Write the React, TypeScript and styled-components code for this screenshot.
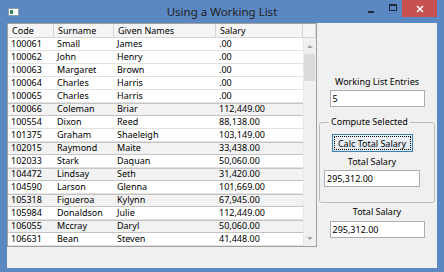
import styled, { createGlobalStyle } from 'styled-components';

const GlobalStyle = createGlobalStyle`
  html, body {
    margin: 0;
    padding: 0;
  }
  body {
    width: 444px;
    height: 272px;
    overflow: hidden;
    font-family: "Noto Sans", "Open Sans", sans-serif;
    color: #000;
  }
`;

interface Employee {
  code: string;
  surname: string;
  given: string;
  salary: string;
  selected?: boolean;
}

const employees: Employee[] = [
  { code: '100061', surname: 'Small', given: 'James', salary: '.00' },
  { code: '100062', surname: 'John', given: 'Henry', salary: '.00' },
  { code: '100063', surname: 'Margaret', given: 'Brown', salary: '.00' },
  { code: '100064', surname: 'Charles', given: 'Harris', salary: '.00' },
  { code: '100065', surname: 'Charles', given: 'Harris', salary: '.00' },
  { code: '100066', surname: 'Coleman', given: 'Briar', salary: '112,449.00', selected: true },
  { code: '100554', surname: 'Dixon', given: 'Reed', salary: '88,138.00' },
  { code: '101375', surname: 'Graham', given: 'Shaeleigh', salary: '103,149.00' },
  { code: '102015', surname: 'Raymond', given: 'Maite', salary: '33,438.00', selected: true },
  { code: '102033', surname: 'Stark', given: 'Daquan', salary: '50,060.00' },
  { code: '104472', surname: 'Lindsay', given: 'Seth', salary: '31,420.00', selected: true },
  { code: '104590', surname: 'Larson', given: 'Glenna', salary: '101,669.00' },
  { code: '105318', surname: 'Figueroa', given: 'Kylynn', salary: '67,945.00', selected: true },
  { code: '105984', surname: 'Donaldson', given: 'Julie', salary: '112,449.00' },
  { code: '106055', surname: 'Mccray', given: 'Daryl', salary: '50,060.00', selected: true },
  { code: '106631', surname: 'Bean', given: 'Steven', salary: '41,448.00' },
];

const COLUMNS = '46px 60px 102px 87px';

const Window = styled.div`
  width: 444px;
  height: 272px;
  box-sizing: border-box;
  padding: 0 7px 4px 7px;
  background: #5b87c2;
  display: flex;
  flex-direction: column;
`;

const TitleBar = styled.div`
  height: 23px;
  flex-shrink: 0;
  display: grid;
  grid-template-columns: 1fr auto 1fr;
  align-items: start;
`;

const AppIcon = styled.svg`
  margin: 8px 0 0 1px;
`;

const Title = styled.div`
  font-size: 11.5px;
  line-height: 14px;
  padding-top: 5px;
  color: #222;
  white-space: nowrap;
`;

const Controls = styled.div`
  display: flex;
  justify-content: flex-end;
  align-items: flex-start;
`;

const CtrlButton = styled.div<{ $w: number; $close?: boolean }>`
  width: ${(p) => p.$w}px;
  height: 17px;
  display: flex;
  align-items: center;
  justify-content: center;
  background: ${(p) => (p.$close ? '#c75050' : 'transparent')};
`;

const MinGlyph = styled.div`
  width: 6px;
  height: 2px;
  margin-top: 6px;
  background: #1c2a3c;
`;

const MaxGlyph = styled.div`
  width: 6px;
  height: 4px;
  margin-top: -2px;
  border: 1px solid #1c2a3c;
  border-top-width: 2px;
`;

const Client = styled.div`
  flex: 1;
  background: #f0f0f0;
  display: flex;
  align-items: flex-start;
`;

const GridBox = styled.div`
  width: 310px;
  box-sizing: border-box;
  border: 1px solid #a0a0a0;
  background: #fff;
  display: flex;
  flex-direction: column;
  font-size: 9px;
`;

const HeaderRow = styled.div`
  display: grid;
  grid-template-columns: ${COLUMNS} 13px;
  height: 14px;
  background: #f5f5f5;
  border-bottom: 1px solid #d5d5d5;
  box-sizing: border-box;
`;

const HeaderCell = styled.div`
  padding: 1px 0 0 4px;
  line-height: 12px;
  border-right: 1px solid #d5d5d5;
  white-space: nowrap;
  overflow: hidden;
`;

const Body = styled.div`
  display: flex;
`;

const Rows = styled.div`
  width: 295px;
`;

const Row = styled.div<{ $selected?: boolean }>`
  display: grid;
  grid-template-columns: ${COLUMNS};
  height: 13px;
  box-sizing: border-box;
  line-height: 12px;
  background: ${(p) => (p.$selected ? '#f2f2f2' : '#fff')};
  border-bottom: 1px solid ${(p) => (p.$selected ? '#c4c4c4' : '#e2e2e2')};
  box-shadow: ${(p) => (p.$selected ? 'inset 0 1px 0 #c4c4c4' : 'none')};
`;

const Cell = styled.div`
  padding-left: 3px;
  white-space: nowrap;
  overflow: hidden;
`;

const ScrollBar = styled.div`
  width: 13px;
  background: #f0f0f0;
  display: flex;
  flex-direction: column;
  border-left: 1px solid #e8e8e8;
  box-sizing: border-box;
`;

const ArrowButton = styled.div`
  height: 16px;
  display: flex;
  align-items: center;
  justify-content: center;
`;

const Arrow = styled.div<{ $down?: boolean }>`
  width: 0;
  height: 0;
  border-left: 3px solid transparent;
  border-right: 3px solid transparent;
  ${(p) => (p.$down ? 'border-top: 3px solid #a6a6a6;' : 'border-bottom: 3px solid #a6a6a6;')}
`;

const Thumb = styled.div`
  height: 27px;
  margin: 0 1px 0 0;
  background: #dcdcdc;
`;

const Track = styled.div`
  flex: 1;
`;

const Side = styled.div`
  flex: 1;
  display: flex;
  flex-direction: column;
  align-items: center;
  font-size: 9px;
`;

const Label = styled.div<{ $top: number }>`
  margin-top: ${(p) => p.$top}px;
  line-height: 12px;
  white-space: nowrap;
`;

const TextBox = styled.div<{ $top: number; $w: number }>`
  margin-top: ${(p) => p.$top}px;
  width: ${(p) => p.$w}px;
  height: 17px;
  box-sizing: border-box;
  border: 1px solid #abadb3;
  background: #fff;
  padding-left: 2px;
  line-height: 15px;
`;

const Group = styled.fieldset`
  margin: 9px 0 0 0;
  width: 116px;
  box-sizing: border-box;
  border: 1px solid #bcbcbc;
  border-radius: 3px;
  padding: 0 10px 15px 0;
  display: flex;
  flex-direction: column;
  align-items: center;
  min-width: 0;
`;

const Legend = styled.legend`
  margin-left: 9px;
  padding: 0 2px;
  line-height: 12px;
`;

const Button = styled.button`
  margin-top: 6px;
  width: 81px;
  height: 18px;
  padding: 0;
  font: inherit;
  color: #000;
  border: 1px solid #3c7fb1;
  background: linear-gradient(#eef3f8, #dfe7ef);
  outline: 1px dotted #000;
  outline-offset: -3px;
`;

const rowsView = employees.map((e) => (
  <Row key={e.code} $selected={e.selected}>
    <Cell>{e.code}</Cell>
    <Cell>{e.surname}</Cell>
    <Cell>{e.given}</Cell>
    <Cell>{e.salary}</Cell>
  </Row>
));

export default function App() {
  return (
    <>
      <GlobalStyle />
      <Window>
        <TitleBar>
          <AppIcon width="11" height="8" viewBox="0 0 11 8">
            <rect x="0.5" y="0.5" width="10" height="7" fill="#fff" stroke="#8a9bb0" />
            <rect x="2" y="2" width="3" height="4" fill="#2e8b57" />
          </AppIcon>
          <Title>Using a Working List</Title>
          <Controls>
            <CtrlButton $w={26}>
              <MinGlyph />
            </CtrlButton>
            <CtrlButton $w={18}>
              <MaxGlyph />
            </CtrlButton>
            <CtrlButton $w={35} $close>
              <svg width="8" height="8" viewBox="0 0 8 8">
                <path d="M1 1 L7 7 M7 1 L1 7" stroke="#fff" strokeWidth="1.6" />
              </svg>
            </CtrlButton>
          </Controls>
        </TitleBar>
        <Client>
          <GridBox>
            <HeaderRow>
              <HeaderCell>Code</HeaderCell>
              <HeaderCell>Surname</HeaderCell>
              <HeaderCell>Given Names</HeaderCell>
              <HeaderCell>Salary</HeaderCell>
              <HeaderCell />
            </HeaderRow>
            <Body>
              <Rows>{rowsView}</Rows>
              <ScrollBar>
                <ArrowButton>
                  <Arrow />
                </ArrowButton>
                <Thumb />
                <Track />
                <ArrowButton>
                  <Arrow $down />
                </ArrowButton>
              </ScrollBar>
            </Body>
          </GridBox>
          <Side>
            <Label $top={53}>Working List Entries</Label>
            <TextBox $top={2} $w={95}>5</TextBox>
            <Group>
              <Legend>Compute Selected</Legend>
              <Button>Calc Total Salary</Button>
              <Label $top={4}>Total Salary</Label>
              <TextBox $top={2} $w={96}>295,312.00</TextBox>
            </Group>
            <Label $top={3}>Total Salary</Label>
            <TextBox $top={3} $w={95}>295,312.00</TextBox>
          </Side>
        </Client>
      </Window>
    </>
  );
}
